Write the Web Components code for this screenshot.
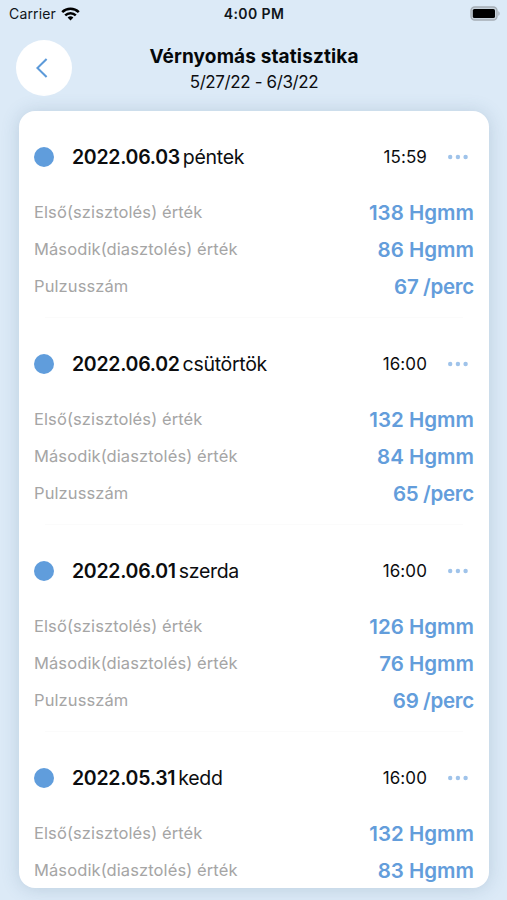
<!DOCTYPE html>
<html lang="hu">
<head>
<meta charset="utf-8">
<title>Vérnyomás statisztika</title>
<style>
  html, body {
    margin: 0;
    height: 100%;
  }
  body {
    overflow: hidden;
    background: #dceaf7;
    color: #0c0d0f;
    font-family: Inter, "Liberation Sans", sans-serif;
  }
</style>
</head>
<body>
<bp-screen>
  <status-bar slot="status" carrier="Carrier" time="4:00 PM"></status-bar>
  <page-header slot="header">
    <span slot="title">Vérnyomás statisztika</span>
    <span slot="range">5/27/22 - 6/3/22</span>
  </page-header>
  <bp-entry date="2022.06.03" day="péntek" time="15:59" systolic="138" diastolic="86" pulse="67"></bp-entry>
  <bp-entry date="2022.06.02" day="csütörtök" time="16:00" systolic="132" diastolic="84" pulse="65"></bp-entry>
  <bp-entry date="2022.06.01" day="szerda" time="16:00" systolic="126" diastolic="76" pulse="69"></bp-entry>
  <bp-entry date="2022.05.31" day="kedd" time="16:00" systolic="132" diastolic="83"></bp-entry>
</bp-screen>

<script>
class BpScreen extends HTMLElement {
  connectedCallback() {
    this.attachShadow({ mode: "open" });
    this.shadowRoot.innerHTML = `
      <style>
        :host {
          display: flex;
          flex-direction: column;
          box-sizing: border-box;
          height: 900px;
          padding-bottom: 12px;
        }
        .card {
          flex: 1;
          min-height: 0;
          overflow: hidden;
          margin: 0 18px 0 19px;
          border-radius: 16px;
          background: #fff;
          box-shadow: 0 1px 18px rgba(70, 105, 135, 0.22);
        }
      </style>
      <slot name="status"></slot>
      <slot name="header"></slot>
      <div class="card"><slot></slot></div>
    `;
  }
}

class StatusBar extends HTMLElement {
  connectedCallback() {
    this.attachShadow({ mode: "open" });
    this.shadowRoot.innerHTML = `
      <style>
        :host {
          display: grid;
          grid-template-columns: 1fr auto 1fr;
          align-items: center;
          height: 27px;
          padding: 0 7px 0 9px;
          font-size: 14px;
          color: #10151a;
        }
        .left {
          display: flex;
          align-items: center;
          gap: 5.5px;
        }
        .carrier { letter-spacing: 0.15px; }
        .time {
          margin-right: 1px;
          font-weight: 600;
          letter-spacing: 0.4px;
        }
        .battery { justify-self: end; }
        svg { display: block; }
      </style>
      <div class="left">
        <span class="carrier">${this.getAttribute("carrier")}</span>
        <svg width="19" height="14" viewBox="0 0 19 14" fill="none" stroke="#000" stroke-width="2.5">
          <path d="M1.2 5.1a11.8 11.8 0 0 1 16.6 0"/>
          <path d="M4.2 8.3a7.6 7.6 0 0 1 10.6 0"/>
          <path d="M9.5 13.6L6.6 10.6a4.1 4.1 0 0 1 5.8 0z" fill="#000" stroke="none"/>
        </svg>
      </div>
      <span class="time">${this.getAttribute("time")}</span>
      <svg class="battery" width="30" height="15" viewBox="0 0 30 15">
        <rect x="1" y="1" width="26" height="13" rx="3.8" fill="#c7d2dc" stroke="#a5adb5" stroke-width="1.4"/>
        <rect x="2.8" y="3" width="22.2" height="9" rx="1.6"/>
        <path d="M28.3 5.2c1.8.6 1.8 4 0 4.6z" fill="#a5adb5"/>
      </svg>
    `;
  }
}

class PageHeader extends HTMLElement {
  connectedCallback() {
    this.attachShadow({ mode: "open" });
    this.shadowRoot.innerHTML = `
      <style>
        :host {
          display: grid;
          grid-template-columns: 56px 1fr 56px;
          height: 84px;
          box-sizing: border-box;
          padding: 13px 15px 0 16px;
        }
        button {
          display: grid;
          place-items: center;
          width: 56px;
          height: 56px;
          padding: 0 4px 0 0;
          border: 0;
          border-radius: 50%;
          background: #fff;
        }
        .titles {
          padding-top: 4px;
          text-align: center;
          white-space: nowrap;
        }
        .title {
          font-size: 19px;
          font-weight: 700;
          line-height: 25px;
          letter-spacing: 0.13px;
          color: #05080a;
        }
        .range {
          font-size: 17px;
          line-height: 26px;
          letter-spacing: -0.38px;
        }
      </style>
      <button aria-label="Vissza">
        <svg width="12" height="20" viewBox="0 0 12 20" fill="none" stroke="#5c9ad9" stroke-width="2.1">
          <path d="M10.6 1L1.4 10l9.2 9"/>
        </svg>
      </button>
      <div class="titles">
        <div class="title"><slot name="title"></slot></div>
        <div class="range"><slot name="range"></slot></div>
      </div>
    `;
  }
}

class BpEntry extends HTMLElement {
  connectedCallback() {
    this.attachShadow({ mode: "open" });
    this.shadowRoot.innerHTML = `
      <style>
        :host {
          display: block;
          box-sizing: border-box;
          height: 207px;
          padding: 20px 15px 0;
        }
        .head {
          display: flex;
          align-items: center;
          height: 52px;
          margin-bottom: 10.5px;
        }
        .dot {
          width: 20px;
          height: 20px;
          margin-right: 18px;
          border-radius: 50%;
          background: #609ddc;
        }
        .date {
          font-size: 19.5px;
          font-weight: 600;
          letter-spacing: -0.28px;
        }
        .day {
          margin-left: 3px;
          font-size: 19.5px;
          letter-spacing: -0.3px;
        }
        .time {
          margin-left: auto;
          font-size: 17px;
          letter-spacing: 0.1px;
        }
        .more {
          margin: 0 5px 0 20px;
        }
        .divider {
          height: 1px;
          margin: 12px 11px 0;
          background: #fbfbfb;
        }
      </style>
      <div class="head">
        <span class="dot"></span>
        <span class="date">${this.getAttribute("date")}</span>
        <span class="day">${this.getAttribute("day")}</span>
        <span class="time">${this.getAttribute("time")}</span>
        <svg class="more" width="22" height="6" viewBox="0 0 22 6" fill="#9fc3ea">
          <circle cx="3.2" cy="3" r="2.2"/><circle cx="10.9" cy="3" r="2.2"/><circle cx="18.6" cy="3" r="2.2"/>
        </svg>
      </div>
      ${this.rows().map(([label, value, unit]) => `<bp-value label="${label}" unit="${unit}">${value}</bp-value>`).join("")}
      <div class="divider"></div>
    `;
  }

  rows() {
    const rows = [
      ["Első(szisztolés) érték", this.getAttribute("systolic"), "Hgmm"],
      ["Második(diasztolés) érték", this.getAttribute("diastolic"), "Hgmm"],
    ];
    if (this.hasAttribute("pulse")) {
      rows.push(["Pulzusszám", this.getAttribute("pulse"), "/perc"]);
    }
    return rows;
  }
}

class BpValue extends HTMLElement {
  connectedCallback() {
    this.attachShadow({ mode: "open" });
    this.shadowRoot.innerHTML = `
      <style>
        :host {
          display: flex;
          align-items: center;
          justify-content: space-between;
          height: 37px;
        }
        .label {
          padding-bottom: 1px;
          font-size: 16.5px;
          letter-spacing: 0.1px;
          color: #a5a5a5;
        }
        .value {
          font-size: 20.5px;
          font-weight: 600;
          color: #639ddb;
        }
        :host([unit="/perc"]) .value {
          word-spacing: -0.5px;
          letter-spacing: -0.25px;
        }
      </style>
      <span class="label">${this.getAttribute("label")}</span>
      <span class="value"><slot></slot> ${this.getAttribute("unit")}</span>
    `;
  }
}

customElements.define("bp-screen", BpScreen);
customElements.define("status-bar", StatusBar);
customElements.define("page-header", PageHeader);
customElements.define("bp-value", BpValue);
customElements.define("bp-entry", BpEntry);
</script>
</body>
</html>
